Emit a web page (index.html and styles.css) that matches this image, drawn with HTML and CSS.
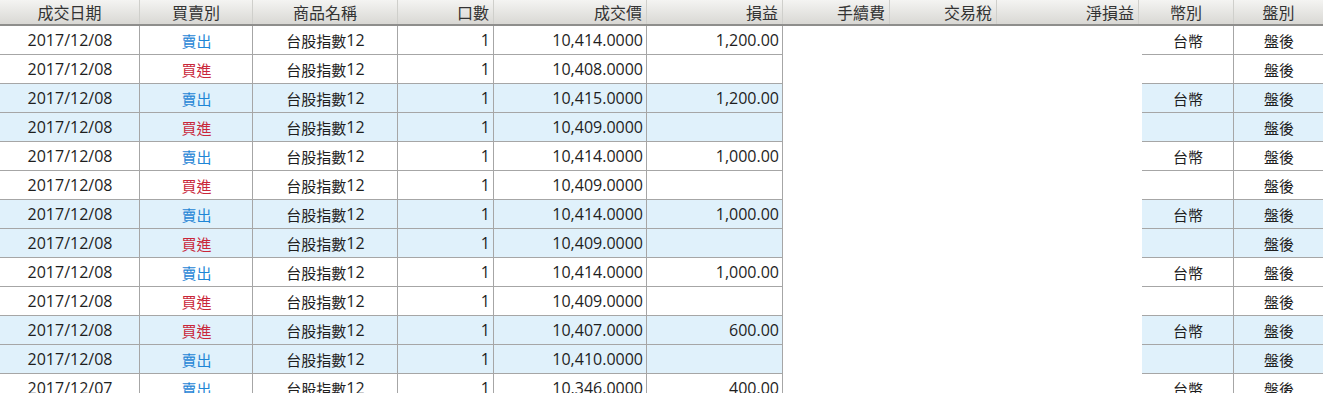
FILE: index.html
```html
<!DOCTYPE html>
<html lang="zh-Hant">
<head>
<meta charset="utf-8">
<title>成交明細</title>
<link rel="stylesheet" href="styles.css">
</head>
<body>
<div class="grid">
  <div class="head">
    <div class="hc c">成交日期</div>
    <div class="hc c">買賣別</div>
    <div class="hc c">商品名稱</div>
    <div class="hc r">口數</div>
    <div class="hc r">成交價</div>
    <div class="hc r">損益</div>
    <div class="hc r">手續費</div>
    <div class="hc r">交易稅</div>
    <div class="hc r">淨損益</div>
    <div class="hc c">幣別</div>
    <div class="hc c">盤別</div>
  </div>

  <div class="row">
    <div class="cell c">2017/12/08</div><div class="cell c sell"><span class="cj">賣出</span></div><div class="cell c"><span class="cj">台股指數</span>12</div><div class="cell r">1</div><div class="cell r">10,414.0000</div><div class="cell r">1,200.00</div><div class="blank"></div><div class="cell c"><span class="cj">台幣</span></div><div class="cell c"><span class="cj">盤後</span></div>
  </div>
  <div class="row">
    <div class="cell c">2017/12/08</div><div class="cell c buy"><span class="cj">買進</span></div><div class="cell c"><span class="cj">台股指數</span>12</div><div class="cell r">1</div><div class="cell r">10,408.0000</div><div class="cell r"></div><div class="blank"></div><div class="cell c"></div><div class="cell c"><span class="cj">盤後</span></div>
  </div>
  <div class="row alt">
    <div class="cell c">2017/12/08</div><div class="cell c sell"><span class="cj">賣出</span></div><div class="cell c"><span class="cj">台股指數</span>12</div><div class="cell r">1</div><div class="cell r">10,415.0000</div><div class="cell r">1,200.00</div><div class="blank"></div><div class="cell c"><span class="cj">台幣</span></div><div class="cell c"><span class="cj">盤後</span></div>
  </div>
  <div class="row alt">
    <div class="cell c">2017/12/08</div><div class="cell c buy"><span class="cj">買進</span></div><div class="cell c"><span class="cj">台股指數</span>12</div><div class="cell r">1</div><div class="cell r">10,409.0000</div><div class="cell r"></div><div class="blank"></div><div class="cell c"></div><div class="cell c"><span class="cj">盤後</span></div>
  </div>
  <div class="row">
    <div class="cell c">2017/12/08</div><div class="cell c sell"><span class="cj">賣出</span></div><div class="cell c"><span class="cj">台股指數</span>12</div><div class="cell r">1</div><div class="cell r">10,414.0000</div><div class="cell r">1,000.00</div><div class="blank"></div><div class="cell c"><span class="cj">台幣</span></div><div class="cell c"><span class="cj">盤後</span></div>
  </div>
  <div class="row">
    <div class="cell c">2017/12/08</div><div class="cell c buy"><span class="cj">買進</span></div><div class="cell c"><span class="cj">台股指數</span>12</div><div class="cell r">1</div><div class="cell r">10,409.0000</div><div class="cell r"></div><div class="blank"></div><div class="cell c"></div><div class="cell c"><span class="cj">盤後</span></div>
  </div>
  <div class="row alt">
    <div class="cell c">2017/12/08</div><div class="cell c sell"><span class="cj">賣出</span></div><div class="cell c"><span class="cj">台股指數</span>12</div><div class="cell r">1</div><div class="cell r">10,414.0000</div><div class="cell r">1,000.00</div><div class="blank"></div><div class="cell c"><span class="cj">台幣</span></div><div class="cell c"><span class="cj">盤後</span></div>
  </div>
  <div class="row alt">
    <div class="cell c">2017/12/08</div><div class="cell c buy"><span class="cj">買進</span></div><div class="cell c"><span class="cj">台股指數</span>12</div><div class="cell r">1</div><div class="cell r">10,409.0000</div><div class="cell r"></div><div class="blank"></div><div class="cell c"></div><div class="cell c"><span class="cj">盤後</span></div>
  </div>
  <div class="row">
    <div class="cell c">2017/12/08</div><div class="cell c sell"><span class="cj">賣出</span></div><div class="cell c"><span class="cj">台股指數</span>12</div><div class="cell r">1</div><div class="cell r">10,414.0000</div><div class="cell r">1,000.00</div><div class="blank"></div><div class="cell c"><span class="cj">台幣</span></div><div class="cell c"><span class="cj">盤後</span></div>
  </div>
  <div class="row">
    <div class="cell c">2017/12/08</div><div class="cell c buy"><span class="cj">買進</span></div><div class="cell c"><span class="cj">台股指數</span>12</div><div class="cell r">1</div><div class="cell r">10,409.0000</div><div class="cell r"></div><div class="blank"></div><div class="cell c"></div><div class="cell c"><span class="cj">盤後</span></div>
  </div>
  <div class="row alt">
    <div class="cell c">2017/12/08</div><div class="cell c buy"><span class="cj">買進</span></div><div class="cell c"><span class="cj">台股指數</span>12</div><div class="cell r">1</div><div class="cell r">10,407.0000</div><div class="cell r">600.00</div><div class="blank"></div><div class="cell c"><span class="cj">台幣</span></div><div class="cell c"><span class="cj">盤後</span></div>
  </div>
  <div class="row alt">
    <div class="cell c">2017/12/08</div><div class="cell c sell"><span class="cj">賣出</span></div><div class="cell c"><span class="cj">台股指數</span>12</div><div class="cell r">1</div><div class="cell r">10,410.0000</div><div class="cell r"></div><div class="blank"></div><div class="cell c"></div><div class="cell c"><span class="cj">盤後</span></div>
  </div>
  <div class="row">
    <div class="cell c">2017/12/07</div><div class="cell c sell"><span class="cj">賣出</span></div><div class="cell c"><span class="cj">台股指數</span>12</div><div class="cell r">1</div><div class="cell r">10,346.0000</div><div class="cell r">400.00</div><div class="blank"></div><div class="cell c"><span class="cj">台幣</span></div><div class="cell c"><span class="cj">盤後</span></div>
  </div>
</div>
</body>
</html>
```

FILE: styles.css
```css
html, body {
  margin: 0;
  padding: 0;
  background: #ffffff;
  overflow: hidden;
}

body {
  width: 1323px;
  height: 393px;
  font-family: "Open Sans", "Noto Sans CJK TC", sans-serif;
  font-size: 16px;
  color: #1e1e1e;
}

.grid {
  display: flex;
  flex-direction: column;
  width: 1324px;
}

.head {
  display: grid;
  grid-template-columns: 140px 113px 145px 96px 153px 136px 107px 107px 142px 95px 90px;
  height: 26px;
  box-sizing: border-box;
  background: linear-gradient(#f4f4f2, #d9d8d4);
  border-bottom: 2px solid #8e8e8c;
}

.hc {
  display: flex;
  align-items: center;
  padding: 0 4px 1px;
  border-right: 1px solid #cfcfcb;
  font-family: "Noto Sans CJK TC", sans-serif;
  font-size: 16px;
  color: #333333;
  white-space: nowrap;
  overflow: hidden;
}

.row {
  display: grid;
  grid-template-columns: 140px 113px 145px 96px 153px 136px 359px 92px 90px;
  height: 29px;
}

.row.alt .cell {
  background: #e0f1fb;
}

.cell {
  display: flex;
  align-items: center;
  box-sizing: border-box;
  padding: 0 3px 0 4px;
  border-right: 1px solid #a6a6a6;
  border-bottom: 1px solid #a6a6a6;
  white-space: nowrap;
  overflow: hidden;
}

.blank {
  background: #ffffff;
}

.c { justify-content: center; }
.r { justify-content: flex-end; }

.cj {
  font-family: "Noto Sans CJK TC", sans-serif;
  font-size: 15px;
}

.sell { color: #1f86d6; }
.buy { color: #c9263a; }
```
